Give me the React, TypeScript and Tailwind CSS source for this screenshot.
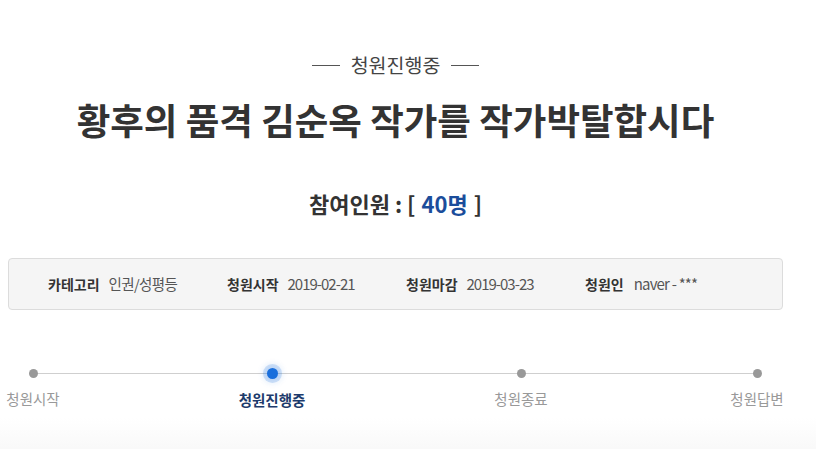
import React from "react";

const steps = [
  { label: "청원시작", active: false, ml: "ml-[-8px]" },
  { label: "청원진행중", active: true, ml: "ml-[173px]" },
  { label: "청원종료", active: false, ml: "ml-[183px]" },
  { label: "청원답변", active: false, ml: "ml-[170px]" },
];

export default function App() {
  return (
    <div
      className="w-[816px] h-[449px] overflow-hidden bg-white"
      style={{ fontFamily: '"Noto Sans CJK KR", "Noto Sans", sans-serif' }}
    >
      <div className="ml-[8px] w-[775px] flex flex-col items-center">
        <div className="mt-[50px] h-[30px] flex items-center gap-[11px] text-[19.5px] text-[#444]">
          <span className="w-[28px] h-px bg-[#555]" />
          <span className="leading-none">청원진행중</span>
          <span className="w-[28px] h-px bg-[#555]" />
        </div>
        <h1 className="mt-[15px] h-[50px] flex items-center text-[36.5px] font-bold text-[#333] leading-none">
          황후의 품격 김순옥 작가를 작가박탈합시다
        </h1>
        <div className="mt-[41px] h-[34px] flex items-center text-[22px] font-bold text-[#333] leading-none">
          참여인원 : [ <span className="text-[#1b4d9b] mx-[6px]">40명</span> ]
        </div>
        <div className="mt-[38px] self-stretch h-[52px] rounded-[4px] border border-[#dcdcdc] bg-[#f5f5f5] grid grid-cols-[179px_179px_179px_179px] items-center pl-[39px] text-[14px] text-[#555]">
          <div className="flex items-center gap-[9px]">
            <span className="font-bold text-[#333]">카테고리</span>
            <span className="text-[14.5px] tracking-[-0.6px]">인권/성평등</span>
          </div>
          <div className="flex items-center gap-[9px]">
            <span className="font-bold text-[#333]">청원시작</span>
            <span className="text-[15px] tracking-[-1px]">2019-02-21</span>
          </div>
          <div className="flex items-center gap-[9px]">
            <span className="font-bold text-[#333]">청원마감</span>
            <span className="text-[15px] tracking-[-1px]">2019-03-23</span>
          </div>
          <div className="flex items-center gap-[10px]">
            <span className="font-bold text-[#333]">청원인</span>
            <span className="text-[15px] tracking-[-0.8px]">naver - ***</span>
          </div>
        </div>
      </div>
      <div className="relative ml-[8px] w-[775px] mt-[58px] h-[50px]">
        <div className="absolute left-[25px] right-[26px] top-[5px] h-px bg-[#cfcfcf]" />
        <div className="flex">
          {steps.map((s, i) => (
            <div
              key={i}
              className={`relative flex flex-col items-center w-[66px] shrink-0 ${s.ml}`}
            >
              {s.active ? (
                <span className="w-[11px] h-[11px] rounded-full bg-[#1a6fdc] shadow-[0_0_0_4px_rgba(26,111,220,0.18),0_0_6px_4px_rgba(26,111,220,0.15)]" />
              ) : (
                <span className="w-[9px] h-[9px] mt-px rounded-full bg-[#999]" />
              )}
              <span
                className={`mt-[14px] text-[14.5px] leading-none whitespace-nowrap ${
                  s.active ? "font-bold text-[#1d3b6c]" : "text-[#999]"
                }`}
              >
                {s.label}
              </span>
            </div>
          ))}
        </div>
      </div>
      <div className="h-[36px] bg-gradient-to-b from-white to-[#f8f8f8]" />
    </div>
  );
}
